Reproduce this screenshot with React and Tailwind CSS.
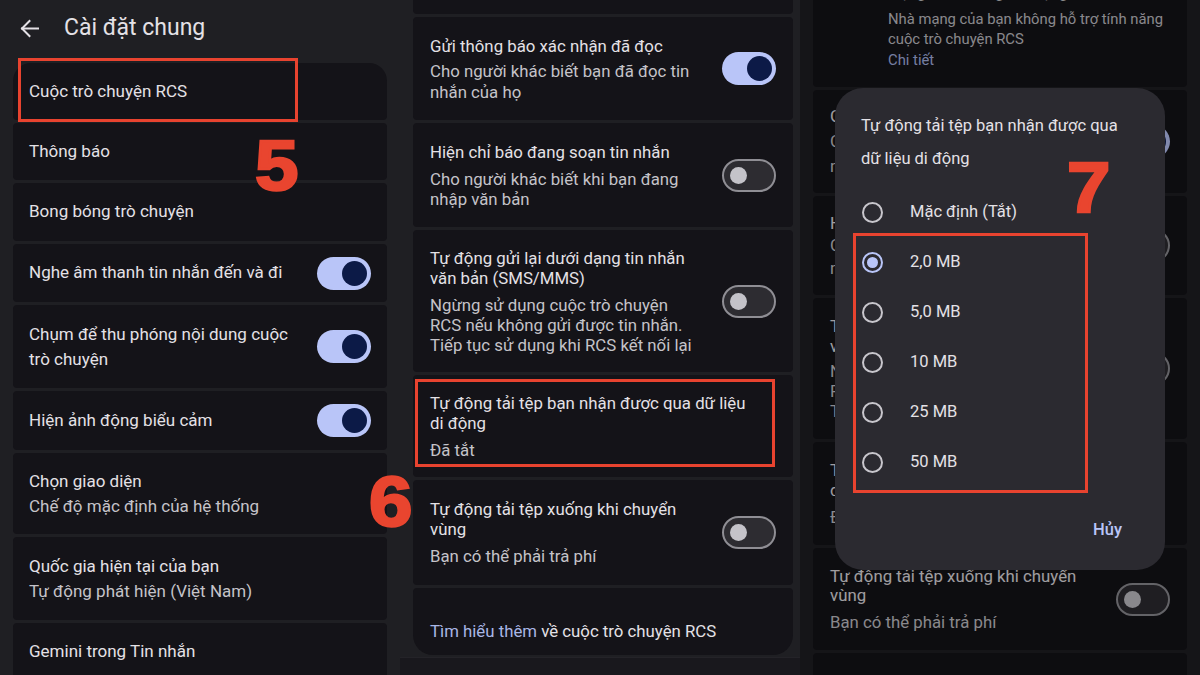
import React from "react";

function Toggle({ on }) {
  return on ? (
    <div className="w-[54px] h-[33px] rounded-full bg-[#b9c5f8] flex items-center justify-end pr-[4px] shrink-0">
      <div className="w-[25px] h-[25px] rounded-full bg-[#0c1a47]" />
    </div>
  ) : (
    <div className="w-[54px] h-[33px] rounded-full bg-[#2d2c31] border-2 border-[#8f8e94] flex items-center pl-[6px] shrink-0">
      <div className="w-[17px] h-[17px] rounded-full bg-[#c4c3c9]" />
    </div>
  );
}

function Radio({ on }) {
  return on ? (
    <div className="w-[21px] h-[21px] rounded-full border-2 border-[#b9c5f8] flex items-center justify-center shrink-0">
      <div className="w-[11px] h-[11px] rounded-full bg-[#b9c5f8]" />
    </div>
  ) : (
    <div className="w-[21px] h-[21px] rounded-full border-2 border-[#c8c6cc] shrink-0" />
  );
}

const T = "text-[#e4e1e6]";
const S = "text-[#c5c3c9]";

function Digit({ children, className }) {
  return (
    <div
      className={
        "absolute origin-left scale-x-[1.1] text-[71px] leading-[70px] font-bold text-[#e9452f] font-['Liberation_Sans',Arial,sans-serif] [-webkit-text-stroke:2.5px_#e9452f] " +
        className
      }
    >
      {children}
    </div>
  );
}

function LeftPanel() {
  const card = "shrink-0 bg-[#141318] rounded-[4px] px-[16px] flex items-center justify-between gap-[16px] text-[17px] whitespace-nowrap";
  return (
    <div className="w-[400px] shrink-0 flex flex-col px-[13px]">
      <div className="shrink-0 h-[56px] flex items-center gap-[25px] pl-[7px]">
        <svg width="19" height="19" viewBox="0 0 19 19" fill="none" stroke="#e4e1e6" strokeWidth="2" strokeLinecap="square">
          <path d="M2 9.5H18" />
          <path d="M9.5 2L2 9.5L9.5 17" />
        </svg>
        <span className={"text-[23px] " + T}>Cài đặt chung</span>
      </div>
      <div className="shrink-0 mt-[7px] flex flex-col gap-[3px]">
        <div className={card + " h-[57px] rounded-t-[18px] relative"}>
          <span className={T}>Cuộc trò chuyện RCS</span>
          <div className="absolute left-[5px] top-[-5px] w-[280px] h-[64px] border-[3px] border-[#e8432f]" />
        </div>
        <div className={card + " h-[57px]"}>
          <span className={T}>Thông báo</span>
        </div>
        <div className={card + " h-[58px]"}>
          <span className={T}>Bong bóng trò chuyện</span>
        </div>
        <div className={card + " h-[58px]"}>
          <span className={T}>Nghe âm thanh tin nhắn đến và đi</span>
          <Toggle on />
        </div>
        <div className={card + " h-[83px]"}>
          <span className={"leading-[25px] " + T}>
            Chụm để thu phóng nội dung cuộc
            <br />
            trò chuyện
          </span>
          <Toggle on />
        </div>
        <div className={card + " h-[59px]"}>
          <span className={T}>Hiện ảnh động biểu cảm</span>
          <Toggle on />
        </div>
        <div className={card + " h-[81px]"}>
          <div className="leading-[25px]">
            <div className={T}>Chọn giao diện</div>
            <div className={S}>Chế độ mặc định của hệ thống</div>
          </div>
        </div>
        <div className={card + " h-[83px]"}>
          <div className="leading-[25px]">
            <div className={T}>Quốc gia hiện tại của bạn</div>
            <div className={S}>Tự động phát hiện (Việt Nam)</div>
          </div>
        </div>
        <div className={card + " h-[58px]"}>
          <span className={T}>Gemini trong Tin nhắn</span>
        </div>
      </div>
    </div>
  );
}

function MiddlePanel() {
  const card = "shrink-0 bg-[#141318] rounded-[4px] px-[17px] flex items-center justify-between gap-[12px] text-[16.8px] whitespace-nowrap";
  return (
    <div className="w-[400px] shrink-0 flex flex-col pl-[13px] pr-[7px]">
      <div className="shrink-0 flex flex-col gap-[3px]">
        <div className="shrink-0 h-[14px] bg-[#141318] rounded-b-[4px]" />
        <div className={card + " h-[103px]"}>
          <div>
            <div className={"leading-[22px] " + T}>Gửi thông báo xác nhận đã đọc</div>
            <div className={"mt-[4px] leading-[21px] " + S}>
              Cho người khác biết bạn đã đọc tin
              <br />
              nhắn của họ
            </div>
          </div>
          <Toggle on />
        </div>
        <div className={card + " h-[104px]"}>
          <div>
            <div className={"leading-[22px] " + T}>Hiện chỉ báo đang soạn tin nhắn</div>
            <div className={"mt-[6px] leading-[20px] " + S}>
              Cho người khác biết khi bạn đang
              <br />
              nhập văn bản
            </div>
          </div>
          <Toggle />
        </div>
        <div className={card + " h-[142px]"}>
          <div>
            <div className={"leading-[20px] " + T}>
              Tự động gửi lại dưới dạng tin nhắn
              <br />
              văn bản (SMS/MMS)
            </div>
            <div className={"mt-[7px] leading-[20px] " + S}>
              Ngừng sử dụng cuộc trò chuyện
              <br />
              RCS nếu không gửi được tin nhắn.
              <br />
              Tiếp tục sử dụng khi RCS kết nối lại
            </div>
          </div>
          <Toggle />
        </div>
        <div className={card + " h-[102px] relative"}>
          <div>
            <div className={"leading-[20px] " + T}>
              Tự động tải tệp bạn nhận được qua dữ liệu
              <br />
              di động
            </div>
            <div className={"mt-[7px] leading-[20px] " + S}>Đã tắt</div>
          </div>
          <div className="absolute left-[2px] top-[4px] w-[360px] h-[88px] border-[3px] border-[#e8432f]" />
        </div>
        <div className={card + " h-[105px]"}>
          <div>
            <div className={"leading-[20px] " + T}>
              Tự động tải tệp xuống khi chuyển
              <br />
              vùng
            </div>
            <div className={"mt-[7px] leading-[20px] " + S}>Bạn có thể phải trả phí</div>
          </div>
          <Toggle />
        </div>
        <div className="shrink-0 bg-[#141318] rounded-t-[4px] rounded-b-[20px] px-[17px] h-[67px] flex items-end pb-[14px] text-[16.8px] leading-[20px]">
          <span>
            <span className="text-[#a9b7e6]">Tìm hiểu thêm</span>
            <span className={T}> về cuộc trò chuyện RCS</span>
          </span>
        </div>
      </div>
      <div className="mt-[2px] -ml-[13px] -mr-[7px] flex-1 bg-[#19181d] border-t border-[#242328]" />
    </div>
  );
}

function RightPanel() {
  const card = "bg-[#141318] rounded-[4px] px-[17px] flex items-center justify-between gap-[12px] text-[16.8px] whitespace-nowrap";
  const options = ["Mặc định (Tắt)", "2,0 MB", "5,0 MB", "10 MB", "25 MB", "50 MB"];
  return (
    <div className="w-[400px] shrink-0 relative overflow-hidden">
      <div className="flex flex-col gap-[3px] px-[13px]">
        <div className="bg-[#141318] rounded-b-[4px] h-[87px] overflow-hidden flex flex-col justify-end pb-[17px] pl-[75px] text-[14.8px] leading-[20.5px] whitespace-nowrap">
          <div className={"mb-[5px] " + S}>Trạng thái: Không khả dụng</div>
          <div className={S}>Nhà mạng của bạn không hỗ trợ tính năng</div>
          <div className={S}>cuộc trò chuyện RCS</div>
          <div className="text-[#a9b7e6]">Chi tiết</div>
        </div>
        <div className={card + " h-[103px]"}>
          <div>
            <div className={"leading-[22px] " + T}>Gửi thông báo xác nhận đã đọc</div>
            <div className={"mt-[2px] leading-[25px] " + S}>
              Cho người khác biết bạn đã đọc tin
              <br />
              nhắn của họ
            </div>
          </div>
          <Toggle on />
        </div>
        <div className={card + " h-[99px]"}>
          <div>
            <div className={"leading-[22px] " + T}>Hiện chỉ báo đang soạn tin nhắn</div>
            <div className={"leading-[23px] " + S}>
              Cho người khác biết khi bạn đang
              <br />
              nhập văn bản
            </div>
          </div>
          <Toggle />
        </div>
        <div className={card + " h-[141px]"}>
          <div>
            <div className={"leading-[20px] " + T}>
              Tự động gửi lại dưới dạng tin nhắn
              <br />
              văn bản (SMS/MMS)
            </div>
            <div className={"mt-[5px] leading-[20px] " + S}>
              Ngừng sử dụng cuộc trò chuyện
              <br />
              RCS nếu không gửi được tin nhắn.
              <br />
              Tiếp tục sử dụng khi RCS kết nối lại
            </div>
          </div>
          <Toggle />
        </div>
        <div className={card + " h-[103px]"}>
          <div>
            <div className={"leading-[20px] " + T}>
              Tự động tải tệp bạn nhận được qua
              <br />
              dữ liệu di động
            </div>
            <div className={"mt-[7px] leading-[20px] " + S}>Đã tắt</div>
          </div>
        </div>
        <div className={card + " h-[102px]"}>
          <div>
            <div className={"leading-[19.5px] " + T}>
              Tự động tải tệp xuống khi chuyển
              <br />
              vùng
            </div>
            <div className={"mt-[6px] leading-[20px] " + S}>Bạn có thể phải trả phí</div>
          </div>
          <Toggle />
        </div>
        <div className={card + " h-[60px]"} />
      </div>
      <div className="absolute inset-0 bg-black/30" />
      <div className="absolute left-[35px] top-[88px] w-[330px] h-[482px] rounded-[28px] bg-[#2b2a30] pt-[21px]">
        <div className={"px-[26px] text-[16.5px] leading-[33px] whitespace-nowrap " + T}>
          Tự động tải tệp bạn nhận được qua
          <br />
          dữ liệu di động
        </div>
        <div className="mt-[12px] flex flex-col">
          {options.map((o, i) => (
            <div key={o} className="h-[50px] flex items-center pl-[27px] gap-[27px]">
              <Radio on={i === 1} />
              <span className={"text-[16.5px] " + T}>{o}</span>
            </div>
          ))}
        </div>
        <div className="mt-[29px] flex justify-end pr-[43px]">
          <span className="text-[16.5px] leading-[28px] font-medium text-[#b9c5f8]">Hủy</span>
        </div>
        <div className="absolute left-[18px] top-[145px] w-[235px] h-[260px] border-[3px] border-[#e8432f]" />
      </div>
    </div>
  );
}

export default function App() {
  return (
    <div className="relative w-[1200px] h-[675px] overflow-hidden bg-[#1f1f23] flex font-[Roboto,'Noto_Sans',sans-serif]">
      <LeftPanel />
      <MiddlePanel />
      <RightPanel />
      <Digit className="left-[255px] top-[131px]">5</Digit>
      <Digit className="left-[369px] top-[467px]">6</Digit>
      <Digit className="left-[1067px] top-[153px]">7</Digit>
    </div>
  );
}
